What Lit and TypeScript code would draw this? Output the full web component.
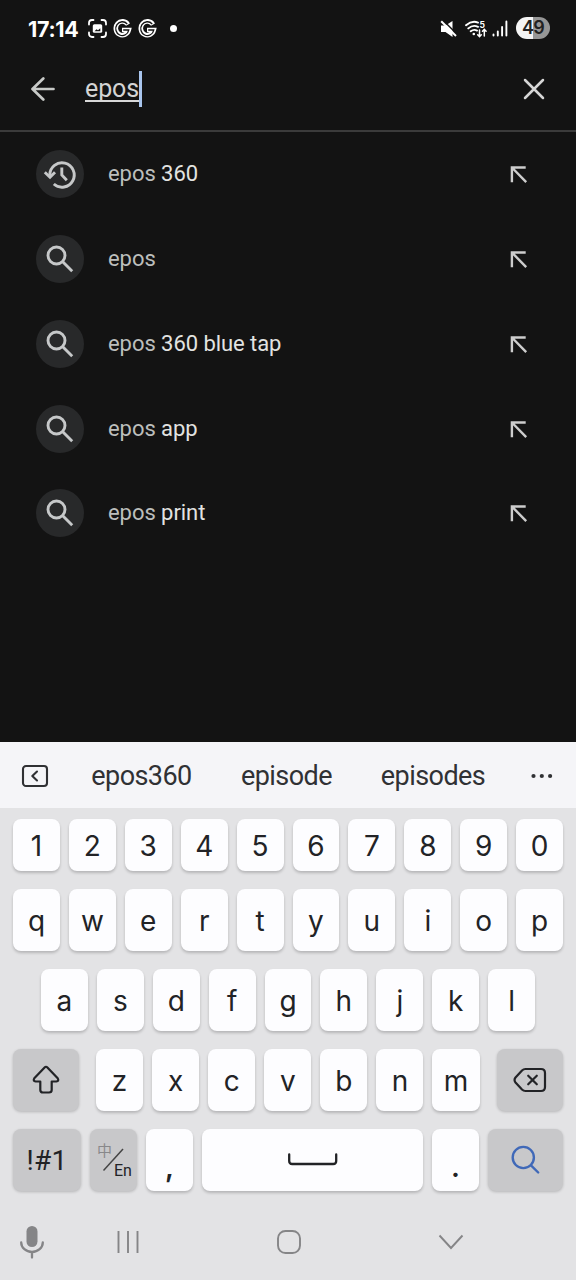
import { LitElement, html, css, svg, nothing } from "lit";
import { customElement, property } from "lit/decorators.js";
import { classMap } from "lit/directives/class-map.js";

@customElement("status-bar")
class StatusBar extends LitElement {
  static styles = css`
    :host { display: block; }
    .bar { display: flex; align-items: center; height: 56px; padding: 1px 27px 0 28px; box-sizing: border-box; color: #fff; }
    .time { width: 60px; font: 700 21.5px/26px Inter, sans-serif; letter-spacing: -0.3px; white-space: nowrap; }
    .left { flex: 1; display: flex; align-items: center; gap: 6px; }
    .dot { width: 7px; height: 7px; border-radius: 50%; background: #fff; margin-left: 7px; }
    .right { display: flex; align-items: center; }
    .mute { margin-right: 7px; }
    .wifi { margin-right: 5px; }
    .signal { margin-right: 8px; }
    .battery { width: 34px; height: 22px; border-radius: 11px; background: linear-gradient(90deg, #f4f4f4 49%, #969696 49%); color: #222; font: 600 18px/22px Inter, sans-serif; text-align: center; letter-spacing: -0.7px; margin: 0 -1px 1px 0; }
    .tiny { font: 700 8.5px Inter, sans-serif; }
    svg { display: block; }
  `;
  private g() {
    return html`<svg width="19" height="20" viewBox="0 0 19 20" fill="none">
      <path d="M15 5.600A6.600 6.900 0 1 0 15.800 11H9" stroke="#fff" stroke-width="4.600"/>
      <path d="M14.200 5A6.600 6.900 0 1 0 15.800 11H10.200" stroke="#131313" stroke-width="1.300"/>
    </svg>`;
  }
  render() {
    return html`<div class="bar">
      <div class="time">17:14</div>
      <div class="left">
        <svg width="19" height="19" viewBox="0 0 19 19" fill="none" stroke="#fff" stroke-width="1.8" stroke-linecap="round">
          <path d="M1 5.500V4a3 3 0 0 1 3-3h1.500M13.500 1H15a3 3 0 0 1 3 3v1.500M18 13.500V15a3 3 0 0 1-3 3h-1.500M5.500 18H4a3 3 0 0 1-3-3v-1.500"/>
          <rect x="4.800" y="5.200" width="9.400" height="8.600" rx="1.600" fill="#fff" stroke="none"/>
          <path d="M6.500 12.300l2-2 1.500 1 2.300-2v3z" fill="#131313" stroke="none"/>
        </svg>
        ${this.g()}${this.g()}
        <div class="dot"></div>
      </div>
      <div class="right">
        <svg class="mute" width="18" height="18" viewBox="0 0 18 18">
          <path d="M1 5.500h4.500l7-4.500v16l-7-5H1z" fill="#fff"/>
          <path d="M2.800 0L17.500 14.700" stroke="#131313" stroke-width="1.500"/>
          <path d="M1.200 1.200L16 16" stroke="#fff" stroke-width="2"/>
        </svg>
        <svg class="wifi" width="22" height="18" viewBox="0 0 22 18" fill="none" stroke="#fff" stroke-width="1.900" stroke-linecap="round">
          <path d="M1 5.200Q7 .2 13 2.600M3.300 8.400Q8 4.300 13 6.800M5.700 11.300Q9 8.800 12 10.600"/>
          <circle cx="8.800" cy="14" r="1.300" fill="#fff" stroke="none"/>
          <text class="tiny" x="14.500" y="7.500" fill="#fff" stroke="none">5</text>
          <path d="M14.500 10v6.500M12.700 14.700l1.800 2 1.800-2M19.300 16V9.500M17.500 11.300l1.800-2 1.800 2" stroke-width="1.500"/>
        </svg>
        <svg class="signal" width="16" height="17" viewBox="0 0 16 17" stroke="#fff" stroke-width="1.900" stroke-linecap="round">
          <path d="M1.500 14.500v1M5.800 11.500v4M10.100 7v8.500M14.400 1.500v14"/>
        </svg>
        <div class="battery">49</div>
      </div>
    </div>`;
  }
}

@customElement("search-header")
class SearchHeader extends LitElement {
  static styles = css`
    :host { display: block; }
    .bar { display: flex; align-items: center; height: 76px; padding: 0 31px 9px; box-sizing: border-box; border-bottom: 2px solid #3b3b3b; }
    .query { flex: 1; display: flex; align-items: center; margin-left: 30px; }
    .text { font: 400 25px/30px Roboto, sans-serif; color: #d4d4d4; position: relative; letter-spacing: -0.1px; }
    .text::after { content: ""; position: absolute; left: 0; right: 0; top: 26px; height: 2px; background: #d8d8d8; }
    .caret { width: 2.500px; height: 36px; background: #a9c5ee; }
    svg { display: block; }
  `;
  render() {
    return html`<div class="bar">
      <svg width="24" height="24" viewBox="0 0 24 24" fill="none" stroke="#c8cac8" stroke-width="2.700" stroke-linecap="round" stroke-linejoin="round"><path d="M22.500 12H1.800M12.300 1.500L1.500 12l10.800 10.500"/></svg>
      <div class="query"><span class="text">epos</span><span class="caret"></span></div>
      <svg width="22" height="22" viewBox="0 0 22 22" fill="none" stroke="#d6d6d6" stroke-width="2.500" stroke-linecap="round"><path d="M2 2l18 18M20 2L2 20"/></svg>
    </div>`;
  }
}

@customElement("suggestion-row")
class SuggestionRow extends LitElement {
  @property() rest = "";
  @property({ type: Boolean }) history = false;
  static styles = css`
    :host { display: block; }
    .row { display: flex; align-items: center; height: 84.75px; padding: 0 48px 0 36px; }
    .badge { width: 48px; height: 48px; border-radius: 50%; background: #28292a; display: grid; place-items: center; }
    .label { flex: 1; margin-left: 24px; font: 400 22px/28px Roboto, sans-serif; letter-spacing: -0.06px; color: #bcbebc; white-space: pre; }
    .rest { color: #e2e3e1; }
    svg { display: block; }
  `;
  render() {
    return html`<div class="row">
      <div class="badge">
        <svg width="48" height="48" viewBox="0 0 48 48" fill="none" stroke="#c6c8c9" stroke-width="2.900">
          ${this.history
            ? svg`<path d="M13.800 25A12.200 12.200 0 1 1 17.800 34"/><path d="M8.800 22.200l5.200 5 5-5"/><path d="M25.800 17.500v7.500l5 5.200"/>`
            : svg`<circle cx="20.500" cy="20.500" r="8.500"/><path d="M26.500 26.500l9.700 9.700"/>`}
        </svg>
      </div>
      <div class="label">epos${this.rest ? html`<span class="rest"> ${this.rest}</span>` : nothing}</div>
      <svg width="18" height="18" viewBox="0 0 18 18" fill="none" stroke="#cdcdcd" stroke-width="2.400"><path d="M15.700 2.500H1.900V17.200M1.900 2.500L16.200 17.100"/></svg>
    </div>`;
  }
}

@customElement("key-cap")
class KeyCap extends LitElement {
  @property() label = "";
  @property() kind = "";
  static styles = css`
    :host { display: flex; min-width: 0; }
    .key { flex: 1; display: grid; place-items: center; border-radius: 8px; background: #fdfdff; color: #222326; box-shadow: 0 2px 3px rgba(0, 0, 0, 0.2); font: 400 28px/34px Inter, sans-serif; padding-top: 2px; box-sizing: border-box; }
    .icon { padding-top: 0; }
    .fn { background: #c8c8ca; box-shadow: 0 1px 3px rgba(0, 0, 0, 0.2); }
    .sym { font: 400 28px/34px Roboto, sans-serif; letter-spacing: 0.3px; }
    .punct { font-weight: 600; padding-top: 14px; }
    .zh { font: 400 15px "Noto Sans CJK SC", sans-serif; }
    .en { font: 400 16px Roboto, sans-serif; }
    svg { display: block; }
  `;
  private icon() {
    switch (this.kind) {
      case "shift":
        return html`<svg width="28" height="30" viewBox="0 0 28 30" fill="none" stroke="#222326" stroke-width="2.200" stroke-linejoin="round"><path d="M12.600 2.500Q14 1 15.400 2.500L25.700 13.300Q27.300 16 24.300 16.500H19.700V25Q19.700 27.500 17 27.500H11Q8.300 27.500 8.300 25V16.500H3.700Q.7 16 2.300 13.300Z"/></svg>`;
      case "delete":
        return html`<svg width="34" height="26" viewBox="0 0 34 26" fill="none" stroke="#222326" stroke-width="2.200" stroke-linejoin="round" stroke-linecap="round"><path d="M12.500 2H28Q32 2 32 6V20Q32 24 28 24H12.500Q10.500 24 9 22.500L2.500 15.500Q.6 13 2.500 10.500L9 3.500Q10.500 2 12.500 2Z"/><path d="M15.200 8.700l8.600 8.600M23.800 8.700l-8.600 8.600"/></svg>`;
      case "space":
        return html`<svg width="50" height="14" viewBox="0 0 50 14" fill="none" stroke="#222326" stroke-width="2.300" stroke-linecap="round"><path d="M1.200 1.500V8Q1.200 11 4.200 11H45.200Q48.200 11 48.200 8V1.500"/></svg>`;
      case "search":
        return html`<svg width="30" height="30" viewBox="0 0 30 30" fill="none" stroke="#4069b8" stroke-width="2.400" stroke-linecap="round"><circle cx="12.300" cy="12.500" r="10.600"/><path d="M20 20.300l7.200 7.200"/></svg>`;
      case "lang":
        return html`<svg width="47" height="62" viewBox="0 0 47 62"><text class="zh" x="7" y="27" fill="#88888a">中</text><path d="M13.500 41.500L33 20" stroke="#444" stroke-width="1.500"/><text class="en" x="24" y="47" fill="#222326">En</text></svg>`;
    }
    return this.label;
  }
  render() {
    const fn = ["shift", "delete", "search", "lang", "sym"].includes(this.kind);
    const icon = this.label === "";
    return html`<div class=${classMap({ key: true, fn, icon, sym: this.kind === "sym", punct: this.kind === "punct" })}>${this.icon()}</div>`;
  }
}

@customElement("soft-keyboard")
class SoftKeyboard extends LitElement {
  static styles = css`
    :host { display: block; background: #e3e3e5; }
    .candidates { display: grid; grid-template-columns: 70px 143px 147px 146px 70px; height: 66px; place-items: center; background: #f5f5f8; color: #303134; font: 400 27px/32px Roboto, sans-serif; letter-spacing: -0.55px; padding-top: 2px; box-sizing: border-box; }
    .keys { display: flex; flex-direction: column; gap: 18px; padding: 11px 13px 0 13px; }
    .row { display: flex; gap: 9px; height: 62px; }
    .row > key-cap { flex: 1; }
    .digits { height: 52px; }
    .home { padding: 0 28px; }
    .lower { display: grid; grid-template-columns: 66px 1fr 66.500px; gap: 17px; height: 62px; }
    .bottom { display: grid; grid-template-columns: 68px 47px 47px 1fr 47px 75px; gap: 9px; height: 62px; }
    .nav { display: grid; grid-template-columns: 63px 130px 192px 132px 59px; height: 88px; align-items: center; justify-items: center; padding-top: 13px; box-sizing: border-box; }
    svg { display: block; }
  `;
  private caps(s: string) {
    return [...s].map((c) => html`<key-cap label=${c}></key-cap>`);
  }
  render() {
    return html`
      <div class="candidates">
        <svg width="28" height="24" viewBox="0 0 28 24" fill="none" stroke="#303134" stroke-width="2.100" stroke-linecap="round" stroke-linejoin="round"><rect x="2" y="2" width="24" height="20" rx="3"/><path d="M16 7.500L11.300 12l4.700 4.500"/></svg>
        <span>epos360</span><span>episode</span><span>episodes</span>
        <svg width="24" height="6" viewBox="0 0 24 6" fill="#303134"><circle cx="4.500" cy="3" r="2.100"/><circle cx="12.800" cy="3" r="2.100"/><circle cx="21.100" cy="3" r="2.100"/></svg>
      </div>
      <div class="keys">
        <div class="row digits">${this.caps("1234567890")}</div>
        <div class="row">${this.caps("qwertyuiop")}</div>
        <div class="row home">${this.caps("asdfghjkl")}</div>
        <div class="lower">
          <key-cap kind="shift"></key-cap>
          <div class="row">${this.caps("zxcvbnm")}</div>
          <key-cap kind="delete"></key-cap>
        </div>
        <div class="bottom">
          <key-cap kind="sym" label="!#1"></key-cap>
          <key-cap kind="lang"></key-cap>
          <key-cap kind="punct" label=","></key-cap>
          <key-cap kind="space"></key-cap>
          <key-cap kind="punct" label="."></key-cap>
          <key-cap kind="search"></key-cap>
        </div>
      </div>
      <div class="nav">
        <svg width="26" height="34" viewBox="0 0 26 34" fill="none" stroke="#858587" stroke-width="2.300" stroke-linecap="round"><rect x="7.500" y="1" width="11" height="21" rx="5.500" fill="#858587" stroke="none"/><path d="M2.200 17.500a10.800 9.500 0 0 0 21.600 0M13 27v5.500"/></svg>
        <svg width="24" height="24" viewBox="0 0 24 24" stroke="#858587" stroke-width="1.900"><path d="M2.500 1v22M12 1v22M21.500 1v22"/></svg>
        <svg width="26" height="26" viewBox="0 0 26 26" fill="none" stroke="#858587" stroke-width="1.900"><rect x="2" y="2" width="22" height="22" rx="7.500"/></svg>
        <svg width="26" height="16" viewBox="0 0 26 16" fill="none" stroke="#858587" stroke-width="1.900"><path d="M1.500 1.500L13 14 24.500 1.500"/></svg>
      </div>`;
  }
}

@customElement("app-root")
class AppRoot extends LitElement {
  static styles = css`
    :host { display: block; }
    .screen { display: flex; flex-direction: column; width: 576px; height: 1280px; overflow: hidden; background: #131313; }
    .list { flex: 1; min-height: 0; }
    soft-keyboard { height: 538px; }
  `;
  render() {
    return html`<div class="screen">
      <status-bar></status-bar>
      <search-header></search-header>
      <div class="list">
        <suggestion-row rest="360" history></suggestion-row>
        <suggestion-row></suggestion-row>
        <suggestion-row rest="360 blue tap"></suggestion-row>
        <suggestion-row rest="app"></suggestion-row>
        <suggestion-row rest="print"></suggestion-row>
      </div>
      <soft-keyboard></soft-keyboard>
    </div>`;
  }
}
